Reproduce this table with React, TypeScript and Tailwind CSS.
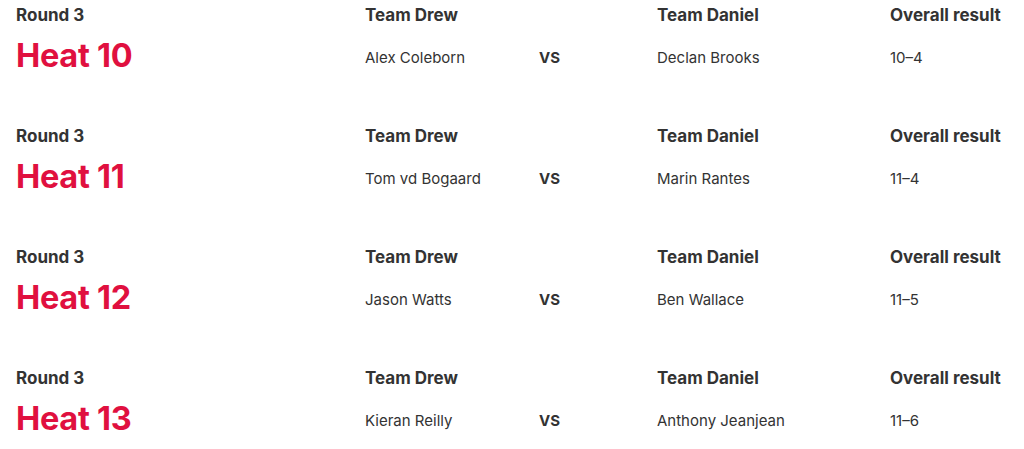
import React from "react";

const heats = [
  { heat: "Heat 10", drew: "Alex Coleborn", daniel: "Declan Brooks", result: "10–4" },
  { heat: "Heat 11", drew: "Tom vd Bogaard", daniel: "Marin Rantes", result: "11–4" },
  { heat: "Heat 12", drew: "Jason Watts", daniel: "Ben Wallace", result: "11–5" },
  { heat: "Heat 13", drew: "Kieran Reilly", daniel: "Anthony Jeanjean", result: "11–6" },
];

export default function App() {
  return (
    <div
      className="w-[1024px] h-[449px] bg-white overflow-hidden text-[#333333]"
      style={{ fontFamily: "Inter, 'Noto Sans', sans-serif" }}
    >
      {heats.map((h) => (
        <div key={h.heat} className="h-[121px] pt-[3px] pl-4 grid content-start grid-cols-[349px_174px_118px_233px_1fr]">
          <div className="text-[17px] leading-6 font-bold">Round 3</div>
          <div className="text-[17px] leading-6 font-bold">Team Drew</div>
          <div />
          <div className="text-[17px] leading-6 font-bold">Team Daniel</div>
          <div className="text-[17px] leading-6 font-bold">Overall result</div>
          <div className="mt-[9px] h-10 flex items-center text-[32.5px] font-bold text-[#e0103f] tracking-[-0.3px]">{h.heat}</div>
          <div className="mt-[11px] h-10 flex items-center text-[15px]">{h.drew}</div>
          <div className="mt-[11px] h-10 flex items-center text-[15px] font-bold">VS</div>
          <div className="mt-[11px] h-10 flex items-center text-[15px]">{h.daniel}</div>
          <div className="mt-[11px] h-10 flex items-center text-[15px]">{h.result}</div>
        </div>
      ))}
    </div>
  );
}
